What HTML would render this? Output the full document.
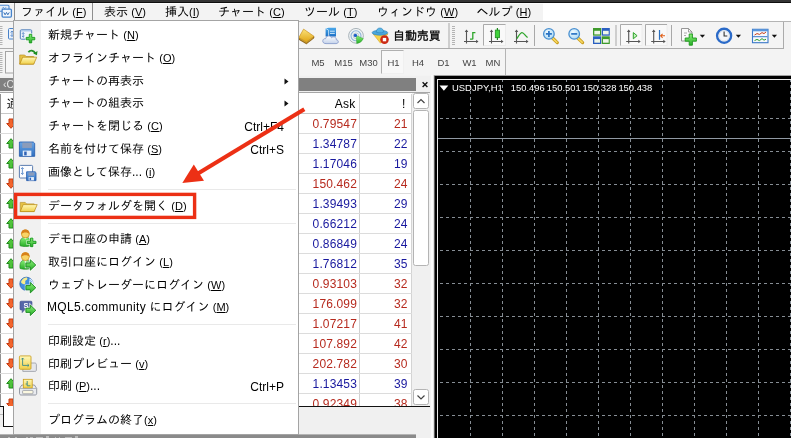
<!DOCTYPE html>
<html lang="ja"><head><meta charset="utf-8"><title>MetaTrader 4</title>
<style>
*{box-sizing:border-box;margin:0;padding:0}
html,body{width:791px;height:438px;overflow:hidden;background:#f2f2f2}
body{position:relative;font-family:"Liberation Sans", "IPAGothic", "Noto Sans CJK JP", sans-serif;font-size:12px;color:#000;-webkit-font-smoothing:antialiased}
.abs{position:absolute}
.t{position:absolute;white-space:nowrap;line-height:1}
u{text-decoration:underline;text-underline-offset:1px}
.k{font-size:11px}
.t,.mi,.sc,.cell,.tf{will-change:opacity}
.mi{position:absolute;left:48px;white-space:nowrap;font-size:12px;line-height:14px;height:14px}
.sc{position:absolute;right:8px;white-space:nowrap;font-size:12px;line-height:14px;height:14px}
.sep{position:absolute;left:34px;right:2px;height:1px;background:#e9e9e9}
.cell{position:absolute;white-space:nowrap;font-size:12px;line-height:14px;height:14px;text-align:right;letter-spacing:.15px}
.tf{position:absolute;top:57px;font-size:9.5px;line-height:12px;color:#444;white-space:nowrap;transform:translateX(-50%)}
</style></head><body>

<div class="abs" style="left:0;top:0;width:791px;height:3px;background:#0e0e0e"></div>
<div class="abs" style="left:0;top:0;width:791px;height:2px;background:#343434"></div>
<div class="abs" style="left:0;top:3px;width:543px;height:19px;background:#f3f3f3;border-top:1px solid #fbfbfb"></div>
<div class="abs" style="left:543px;top:3px;width:248px;height:19px;background:#fff"></div>
<svg class="abs" style="left:0;top:3px" width="14" height="17" viewBox="0 3 14 17"><rect x="-2" y="5.300" width="11" height="6" rx="1" fill="#e4eefa" stroke="#4f8ad2" stroke-width="1.100"/><path d="M2 8.800l1.300-1.600 1.400 1.600 1.300-1.600" fill="none" stroke="#4f8ad2" stroke-width=".8"/><rect x="2.100" y="9.100" width="9.300" height="8" rx="1" fill="#f2f7fd" stroke="#4583cc" stroke-width="1.300"/><path d="M3.800 12.400l1.300 2.400 1.400-2.400 1.300 2.400 1.500-2.400" fill="none" stroke="#3a73b8" stroke-width="1"/></svg>
<div class="abs" style="left:14px;top:3px;width:79px;height:18px;background:#f5f5f5;border:1px solid #8e8e8e;border-top:none;border-bottom:none"></div>
<div class="t" style="left:21px;top:5px;font-size:12px;line-height:14px">ファイル <span class="k">(<u>F</u>)</span></div>
<div class="t" style="left:104px;top:5px;font-size:12px;line-height:14px">表示 <span class="k">(<u>V</u>)</span></div>
<div class="t" style="left:165px;top:5px;font-size:12px;line-height:14px">挿入<span class="k">(<u>I</u>)</span></div>
<div class="t" style="left:218px;top:5px;font-size:12px;line-height:14px">チャート <span class="k">(<u>C</u>)</span></div>
<div class="t" style="left:304px;top:5px;font-size:12px;line-height:14px">ツール <span class="k">(<u>T</u>)</span></div>
<div class="t" style="left:377px;top:5px;font-size:12px;line-height:14px">ウィンドウ <span class="k">(<u>W</u>)</span></div>
<div class="t" style="left:476.5px;top:5px;font-size:12px;line-height:14px">ヘルプ <span class="k">(<u>H</u>)</span></div>
<div class="abs" style="left:0;top:21px;width:791px;height:1px;background:#b4b4b4"></div>
<div class="abs" style="left:0;top:22px;width:784px;height:27px;background:#f4f4f4;border-right:1px solid #ababab;border-bottom:1px solid #ababab"></div>
<div class="abs" style="left:784px;top:22px;width:7px;height:27px;background:#f3f3f3"></div>
<div class="abs" style="left:0;top:49px;width:791px;height:27px;background:#f3f3f3"></div>
<div class="abs" style="left:0;top:49px;width:506px;height:26px;background:#f4f4f4;border-right:1px solid #b4b4b4"></div>
<div class="abs" style="left:381px;top:50px;width:23px;height:24px;background:#f8f8f8;border:1px solid #f0f0f0;border-left-color:#b0b0b0;border-top-color:#b0b0b0"></div>
<div class="tf" style="left:318px">M5</div>
<div class="tf" style="left:343.5px">M15</div>
<div class="tf" style="left:368.5px">M30</div>
<div class="tf" style="left:393.5px">H1</div>
<div class="tf" style="left:418px">H4</div>
<div class="tf" style="left:443.5px">D1</div>
<div class="tf" style="left:469.5px">W1</div>
<div class="tf" style="left:493px">MN</div>
<div class="t" style="left:393px;top:29px;font-size:12px;line-height:14px;-webkit-text-stroke:.32px #000;letter-spacing:-.1px">自動売買</div>
<svg class="abs" style="left:0;top:0" width="791" height="438" viewBox="0 0 791 438"><defs><linearGradient id="gy" x1="0" y1="0" x2="0" y2="1"><stop offset="0" stop-color="#fbe27a"/><stop offset="1" stop-color="#e0a514"/></linearGradient><linearGradient id="gb" x1="0" y1="0" x2="0" y2="1"><stop offset="0" stop-color="#4aa8ea"/><stop offset="1" stop-color="#1d6fc4"/></linearGradient><linearGradient id="gg" x1="0" y1="0" x2="0" y2="1"><stop offset="0" stop-color="#8af078"/><stop offset="1" stop-color="#27ae27"/></linearGradient><linearGradient id="gc" x1="0" y1="0" x2="0" y2="1"><stop offset="0" stop-color="#ffffff"/><stop offset="1" stop-color="#c4d2ea"/></linearGradient><radialGradient id="gl" cx=".4" cy=".35" r=".7"><stop offset="0" stop-color="#f2fbff"/><stop offset="1" stop-color="#a9d8f4"/></radialGradient><linearGradient id="gf" x1="0" y1="0" x2="0" y2="1"><stop offset="0" stop-color="#fff8b8"/><stop offset="1" stop-color="#f0d04a"/></linearGradient><linearGradient id="gfl" x1="0" y1="0" x2="0" y2="1"><stop offset="0" stop-color="#6aa6e6"/><stop offset="1" stop-color="#2f6fc0"/></linearGradient></defs><rect x="0" y="26" width="2.500" height="1" fill="#b4b4b4"/><rect x="0" y="28" width="2.500" height="1" fill="#b4b4b4"/><rect x="0" y="30" width="2.500" height="1" fill="#b4b4b4"/><rect x="0" y="32" width="2.500" height="1" fill="#b4b4b4"/><rect x="0" y="34" width="2.500" height="1" fill="#b4b4b4"/><rect x="0" y="36" width="2.500" height="1" fill="#b4b4b4"/><rect x="0" y="38" width="2.500" height="1" fill="#b4b4b4"/><rect x="0" y="40" width="2.500" height="1" fill="#b4b4b4"/><rect x="0" y="42" width="2.500" height="1" fill="#b4b4b4"/><rect x="0" y="44" width="2.500" height="1" fill="#b4b4b4"/><rect x="0" y="52" width="2.500" height="1" fill="#b4b4b4"/><rect x="0" y="54" width="2.500" height="1" fill="#b4b4b4"/><rect x="0" y="56" width="2.500" height="1" fill="#b4b4b4"/><rect x="0" y="58" width="2.500" height="1" fill="#b4b4b4"/><rect x="0" y="60" width="2.500" height="1" fill="#b4b4b4"/><rect x="0" y="62" width="2.500" height="1" fill="#b4b4b4"/><rect x="0" y="64" width="2.500" height="1" fill="#b4b4b4"/><rect x="0" y="66" width="2.500" height="1" fill="#b4b4b4"/><rect x="0" y="68" width="2.500" height="1" fill="#b4b4b4"/><rect x="0" y="70" width="2.500" height="1" fill="#b4b4b4"/><rect x="0" y="72" width="2.500" height="1" fill="#b4b4b4"/><rect x="8.5" y="28.5" width="10" height="10.5" rx="1" fill="#e9f1fb" stroke="#4a82c8"/><path d="M12 31v5.5M10.6 32.4L12 31l1.4 1.4M10.6 35.1L12 36.5l1.4-1.4" stroke="#4a82c8" stroke-width=".8" fill="none"/><rect x="5.500" y="51.500" width="12" height="21.500" fill="#f7f7f7" stroke="#a4a4a4"/><path d="M298.8 37.600L306.400 42 314 36.300V38L306.400 43.900 298.800 39.400Z" fill="#9a6a10" stroke="#7a4e0a" stroke-width=".5"/><path d="M303.600 29.100L314 36.300 306.400 42 298.800 37.600Z" fill="url(#gy)" stroke="#c48a14" stroke-width=".6"/><path d="M299.600 38.700L306.400 42.700 313.400 37.400" fill="none" stroke="#f0cc50" stroke-width=".5"/><path d="M325.6 28.4l3-.6h7.4v8.8h-10.4z" fill="url(#gb)"/><path d="M326 28.6l2.6 1.6v6.4" stroke="#d6ecfb" stroke-width=".8" fill="none"/><path d="M330 31.2h4.8M330 33.4h4.8" stroke="#cfe8fa" stroke-width="1"/><path d="M326 43.6c-2.600 0-3.400-1.600-3.200-2.900.200-1.500 1.600-2.300 2.800-2 .300-2 2.300-3.200 4.100-2.600 1 .300 1.600 1 1.900 1.700.800-1 2.500-1.200 3.500-.500 1 .600 1.300 1.600 1.200 2.500 1.300.100 2 1 2 1.900 0 1-.800 1.900-2.200 1.900z" fill="url(#gc)" stroke="#7d93c6" stroke-width=".8"/><circle cx="356" cy="35.8" r="7.4" fill="#eef2f4" stroke="#aab4ba" stroke-width="1"/><circle cx="356" cy="35.8" r="5" fill="none" stroke="#8fb5d8" stroke-width="1.1"/><circle cx="356" cy="35.8" r="2.8" fill="none" stroke="#b8c6cf" stroke-width=".9"/><path d="M356.200 35.400L356.700 43.600A8 8 0 0 0 363.300 38.600Z" fill="url(#gg)" stroke="#2a9a2a" stroke-width=".4"/><circle cx="355.4" cy="35.4" r="1.7" fill="#1f5fc8"/><path d="M373 33.800L380.500 43.200 388 33.800Z" fill="#f6d24a" stroke="#d9a520" stroke-width=".6"/><ellipse cx="379.900" cy="32.700" rx="7.800" ry="2.500" fill="#4aa6dc" stroke="#2a7fb8" stroke-width=".6"/><path d="M376.300 32.200c0-2.600 1.400-4.200 3.600-4.200s3.600 1.600 3.600 4.200c-2 .800-5.200.800-7.200 0z" fill="#5ab4e4" stroke="#2a7fb8" stroke-width=".6"/><circle cx="384.500" cy="39.600" r="4.300" fill="#cc2a14"/><rect x="382.800" y="37.900" width="3.400" height="3.400" fill="#fff"/><rect x="448.500" y="23" width="1" height="25" fill="#a8a8a8"/><rect x="452" y="26" width="3" height="1" fill="#b4b4b4"/><rect x="452" y="28" width="3" height="1" fill="#b4b4b4"/><rect x="452" y="30" width="3" height="1" fill="#b4b4b4"/><rect x="452" y="32" width="3" height="1" fill="#b4b4b4"/><rect x="452" y="34" width="3" height="1" fill="#b4b4b4"/><rect x="452" y="36" width="3" height="1" fill="#b4b4b4"/><rect x="452" y="38" width="3" height="1" fill="#b4b4b4"/><rect x="452" y="40" width="3" height="1" fill="#b4b4b4"/><rect x="452" y="42" width="3" height="1" fill="#b4b4b4"/><rect x="452" y="44" width="3" height="1" fill="#b4b4b4"/><path d="M466.5 30.5V43.5 M464 41.5H477.5" stroke="#555" stroke-width="1.1" fill="none"/><path d="M466.5 29.5l-1.8 2.4h3.6z M478.5 41.5l-2.4 -1.800v3.600z" fill="#555"/><path d="M472.800 32v7.200M472.800 39.200h-2.800M472.800 32.600h2.600" stroke="#2da52a" stroke-width="1.300" fill="none"/><rect x="483.500" y="24.500" width="22" height="21" fill="#f9f9f9" stroke="#ececec"/><path d="M483.500 45.500V24.500H505.500" fill="none" stroke="#aaa"/><path d="M491.5 30.5V43.5 M489 41.5H502.5" stroke="#555" stroke-width="1.1" fill="none"/><path d="M491.5 29.5l-1.8 2.4h3.6z M503.5 41.5l-2.4 -1.800v3.600z" fill="#555"/><path d="M497.400 28v12" stroke="#1f8a1f" stroke-width="1.200"/><rect x="495.300" y="30.100" width="4.300" height="7.600" fill="#3fd23a" stroke="#1f8a1f" stroke-width=".8"/><path d="M516.5 30.5V43.5 M514 41.5H527.5" stroke="#555" stroke-width="1.1" fill="none"/><path d="M516.5 29.5l-1.8 2.4h3.6z M528.5 41.5l-2.4 -1.800v3.600z" fill="#555"/><path d="M516.800 38.600c2-3 3.600-6 5.200-6 1.800 0 3.200 3 5.600 5" stroke="#2da52a" stroke-width="1.300" fill="none"/><rect x="534" y="25" width="1" height="21" fill="#a8a8a8"/><path d="M552.5 38l4.800 4.600" stroke="#c79a1a" stroke-width="3.200" stroke-linecap="round"/><path d="M552.8 38.300l4.200 4" stroke="#f7d860" stroke-width="1.600" stroke-linecap="round"/><circle cx="548.9" cy="33.900" r="5.300" fill="url(#gl)" stroke="#4a90d0" stroke-width="1.300"/><path d="M545.9 33.900h6M548.9 30.900v6" stroke="#2a74c4" stroke-width="1.700"/><path d="M577.8 38l4.800 4.600" stroke="#c79a1a" stroke-width="3.200" stroke-linecap="round"/><path d="M578.1 38.300l4.200 4" stroke="#f7d860" stroke-width="1.600" stroke-linecap="round"/><circle cx="574.2" cy="33.900" r="5.300" fill="url(#gl)" stroke="#4a90d0" stroke-width="1.300"/><path d="M571.2 33.900h6" stroke="#2a74c4" stroke-width="1.700"/><rect x="593" y="28" width="8.100" height="7.700" fill="#3f9a2c"/><rect x="594.3" y="30.8" width="5.700" height="3.600" fill="#eef6e8"/><rect x="601.7" y="28" width="8.100" height="7.700" fill="#2a5fc0"/><rect x="603" y="30.8" width="5.700" height="3.600" fill="#eef6e8"/><rect x="593" y="36.3" width="8.100" height="7.700" fill="#2a5fc0"/><rect x="594.3" y="39.1" width="5.700" height="3.600" fill="#eef6e8"/><rect x="601.7" y="36.3" width="8.100" height="7.700" fill="#3f9a2c"/><rect x="603" y="39.1" width="5.700" height="3.600" fill="#eef6e8"/><rect x="615.500" y="25" width="1" height="21" fill="#a8a8a8"/><rect x="620.5" y="24.500" width="21.500" height="21" fill="#f9f9f9" stroke="#ececec"/><path d="M620.5 45.500V24.500H642" fill="none" stroke="#aaa"/><rect x="645.5" y="24.500" width="21.500" height="21" fill="#f9f9f9" stroke="#ececec"/><path d="M645.5 45.500V24.500H667" fill="none" stroke="#aaa"/><path d="M628.7 30.5V43.5 M626.2 41.5H639.7" stroke="#555" stroke-width="1.1" fill="none"/><path d="M628.7 29.5l-1.8 2.4h3.6z M640.7 41.5l-2.4 -1.800v3.600z" fill="#555"/><path d="M633.300 32.600l3.800 3.100-3.800 3.100z" fill="#c8f0c0" stroke="#2da52a" stroke-width="1"/><path d="M653.7 30.5V43.5 M651.2 41.5H664.7" stroke="#555" stroke-width="1.1" fill="none"/><path d="M653.7 29.5l-1.8 2.4h3.6z M665.7 41.5l-2.4 -1.800v3.600z" fill="#555"/><path d="M659.500 30v9.800" stroke="#2a6fc0" stroke-width="1.200"/><path d="M665 35.800h-4M662.600 33.800l-2 2 2 2" stroke="#e0601a" stroke-width="1.100" fill="none"/><rect x="671" y="25" width="1" height="21" fill="#a8a8a8"/><path d="M681.500 28.500h7l3.500 3.500v9h-10.500z" fill="#fafafa" stroke="#8a8a8a" stroke-width=".9"/><path d="M688.500 28.500v3.500h3.500" fill="none" stroke="#8a8a8a" stroke-width=".8"/><path d="M684 33h3M684 35.500h2" stroke="#999" stroke-width=".8"/><path d="M689.200 34h3.200v4h4v3.200h-4v4h-3.200v-4h-4v-3.200h4z" fill="url(#gg)" stroke="#1c961c" stroke-width=".9"/><path d="M699.8 34.7h5.2l-2.6 3z" fill="#111"/><circle cx="724.100" cy="35.800" r="7" fill="#fff" stroke="#2a6ac8" stroke-width="2.400"/><circle cx="724.100" cy="35.800" r="5.200" fill="#f4f6fa" stroke="#c8d0dc" stroke-width=".6"/><path d="M724.100 31.600v4.400h3.200" stroke="#333" stroke-width="1.100" fill="none"/><path d="M735.8 34.7h5.2l-2.6 3z" fill="#111"/><rect x="752.500" y="29.300" width="15.500" height="13.400" fill="#f6f9fd" stroke="#3a78c8" stroke-width="1.100"/><rect x="752.500" y="29.300" width="15.500" height="2" fill="#5a96dc"/><path d="M753 36.700h14.500" stroke="#3a78c8" stroke-width="1"/><path d="M754.500 35l2.500-1.400 2.500.8 2.500-1.800 2 1 2-1.600" stroke="#c8401a" stroke-width="1" fill="none"/><path d="M754.500 40.600l2.500-1.200 2.500 1.200 2.500-2 2 1.600 2-1" stroke="#2a9a2a" stroke-width="1" fill="none"/><path d="M771.8 34.7h5.2l-2.6 3z" fill="#111"/></svg>
<div class="abs" style="left:0;top:76px;width:432px;height:362px;background:#f0f0f0"></div>
<div class="abs" style="left:0;top:78px;width:416px;height:13px;background:#808080"></div>
<div class="t" style="left:3px;top:79px;font-size:10.5px;line-height:11px;color:#e4e4e4">‹C</div>
<svg class="abs" style="left:420px;top:80px" width="10" height="10"><path d="M2.600 2.300l4.800 4.800M7.400 2.300l-4.800 4.800" stroke="#111" stroke-width="1.350"/></svg>
<div class="abs" style="left:0;top:93px;width:412px;height:314px;background:#fff"></div>
<div class="abs" style="left:0;top:92.300px;width:430px;height:1px;background:#a6a6a6"></div>
<div class="abs" style="left:0;top:113px;width:412px;height:1px;background:#c8c8c8"></div>
<div class="cell" style="left:300px;width:55.5px;top:97px;color:#000;letter-spacing:.25px">Ask</div>
<div class="cell" style="left:362px;width:43.5px;top:97px;color:#000">!</div>
<div class="t" style="left:6.5px;top:97px;font-size:12px;line-height:14px">通貨</div>
<div class="abs" style="left:359px;top:94px;width:1px;height:312px;background:#d0d0d0"></div>
<div class="abs" style="left:411px;top:94px;width:1px;height:312px;background:#d4d4d4"></div>
<div class="abs" style="left:.4px;top:94px;width:1px;height:312px;background:#909090"></div>
<div class="abs" style="left:0;top:133px;width:412px;height:1px;background:#dcdcdc"></div>
<div class="cell" style="left:300px;width:57px;top:117px;color:#b62a1e">0.79547</div>
<div class="cell" style="left:362px;width:45.6px;top:117px;color:#b62a1e">21</div>
<svg class="abs" style="left:5.6px;top:118px" width="10" height="11" viewBox="0 0 10 11"><path d="M5 10.3L9.3 5.5H7V1H3V5.5H.7Z" fill="#f2642c" stroke="#c43a10" stroke-width="1"/></svg>
<div class="abs" style="left:0;top:153px;width:412px;height:1px;background:#dcdcdc"></div>
<div class="cell" style="left:300px;width:57px;top:137px;color:#18189e">1.34787</div>
<div class="cell" style="left:362px;width:45.6px;top:137px;color:#18189e">22</div>
<svg class="abs" style="left:5.6px;top:138px" width="10" height="11" viewBox="0 0 10 11"><path d="M5 .7L9.3 5.5H7V10H3V5.5H.7Z" fill="#4fc23a" stroke="#1f8a1a" stroke-width="1"/></svg>
<div class="abs" style="left:0;top:173px;width:412px;height:1px;background:#dcdcdc"></div>
<div class="cell" style="left:300px;width:57px;top:157px;color:#18189e">1.17046</div>
<div class="cell" style="left:362px;width:45.6px;top:157px;color:#18189e">19</div>
<svg class="abs" style="left:5.6px;top:158px" width="10" height="11" viewBox="0 0 10 11"><path d="M5 .7L9.3 5.5H7V10H3V5.5H.7Z" fill="#4fc23a" stroke="#1f8a1a" stroke-width="1"/></svg>
<div class="abs" style="left:0;top:193px;width:412px;height:1px;background:#dcdcdc"></div>
<div class="cell" style="left:300px;width:57px;top:177px;color:#b62a1e">150.462</div>
<div class="cell" style="left:362px;width:45.6px;top:177px;color:#b62a1e">24</div>
<svg class="abs" style="left:5.6px;top:178px" width="10" height="11" viewBox="0 0 10 11"><path d="M5 10.3L9.3 5.5H7V1H3V5.5H.7Z" fill="#f2642c" stroke="#c43a10" stroke-width="1"/></svg>
<div class="abs" style="left:0;top:213px;width:412px;height:1px;background:#dcdcdc"></div>
<div class="cell" style="left:300px;width:57px;top:197px;color:#18189e">1.39493</div>
<div class="cell" style="left:362px;width:45.6px;top:197px;color:#18189e">29</div>
<svg class="abs" style="left:5.6px;top:198px" width="10" height="11" viewBox="0 0 10 11"><path d="M5 .7L9.3 5.5H7V10H3V5.5H.7Z" fill="#4fc23a" stroke="#1f8a1a" stroke-width="1"/></svg>
<div class="abs" style="left:0;top:233px;width:412px;height:1px;background:#dcdcdc"></div>
<div class="cell" style="left:300px;width:57px;top:217px;color:#18189e">0.66212</div>
<div class="cell" style="left:362px;width:45.6px;top:217px;color:#18189e">24</div>
<svg class="abs" style="left:5.6px;top:218px" width="10" height="11" viewBox="0 0 10 11"><path d="M5 .7L9.3 5.5H7V10H3V5.5H.7Z" fill="#4fc23a" stroke="#1f8a1a" stroke-width="1"/></svg>
<div class="abs" style="left:0;top:253px;width:412px;height:1px;background:#dcdcdc"></div>
<div class="cell" style="left:300px;width:57px;top:237px;color:#18189e">0.86849</div>
<div class="cell" style="left:362px;width:45.6px;top:237px;color:#18189e">24</div>
<svg class="abs" style="left:5.6px;top:238px" width="10" height="11" viewBox="0 0 10 11"><path d="M5 .7L9.3 5.5H7V10H3V5.5H.7Z" fill="#4fc23a" stroke="#1f8a1a" stroke-width="1"/></svg>
<div class="abs" style="left:0;top:273px;width:412px;height:1px;background:#dcdcdc"></div>
<div class="cell" style="left:300px;width:57px;top:257px;color:#18189e">1.76812</div>
<div class="cell" style="left:362px;width:45.6px;top:257px;color:#18189e">35</div>
<svg class="abs" style="left:5.6px;top:258px" width="10" height="11" viewBox="0 0 10 11"><path d="M5 .7L9.3 5.5H7V10H3V5.5H.7Z" fill="#4fc23a" stroke="#1f8a1a" stroke-width="1"/></svg>
<div class="abs" style="left:0;top:293px;width:412px;height:1px;background:#dcdcdc"></div>
<div class="cell" style="left:300px;width:57px;top:277px;color:#b62a1e">0.93103</div>
<div class="cell" style="left:362px;width:45.6px;top:277px;color:#b62a1e">32</div>
<svg class="abs" style="left:5.6px;top:278px" width="10" height="11" viewBox="0 0 10 11"><path d="M5 10.3L9.3 5.5H7V1H3V5.5H.7Z" fill="#f2642c" stroke="#c43a10" stroke-width="1"/></svg>
<div class="abs" style="left:0;top:313px;width:412px;height:1px;background:#dcdcdc"></div>
<div class="cell" style="left:300px;width:57px;top:297px;color:#b62a1e">176.099</div>
<div class="cell" style="left:362px;width:45.6px;top:297px;color:#b62a1e">32</div>
<svg class="abs" style="left:5.6px;top:298px" width="10" height="11" viewBox="0 0 10 11"><path d="M5 10.3L9.3 5.5H7V1H3V5.5H.7Z" fill="#f2642c" stroke="#c43a10" stroke-width="1"/></svg>
<div class="abs" style="left:0;top:333px;width:412px;height:1px;background:#dcdcdc"></div>
<div class="cell" style="left:300px;width:57px;top:317px;color:#b62a1e">1.07217</div>
<div class="cell" style="left:362px;width:45.6px;top:317px;color:#b62a1e">41</div>
<svg class="abs" style="left:5.6px;top:318px" width="10" height="11" viewBox="0 0 10 11"><path d="M5 10.3L9.3 5.5H7V1H3V5.5H.7Z" fill="#f2642c" stroke="#c43a10" stroke-width="1"/></svg>
<div class="abs" style="left:0;top:353px;width:412px;height:1px;background:#dcdcdc"></div>
<div class="cell" style="left:300px;width:57px;top:337px;color:#b62a1e">107.892</div>
<div class="cell" style="left:362px;width:45.6px;top:337px;color:#b62a1e">42</div>
<svg class="abs" style="left:5.6px;top:338px" width="10" height="11" viewBox="0 0 10 11"><path d="M5 10.3L9.3 5.5H7V1H3V5.5H.7Z" fill="#f2642c" stroke="#c43a10" stroke-width="1"/></svg>
<div class="abs" style="left:0;top:373px;width:412px;height:1px;background:#dcdcdc"></div>
<div class="cell" style="left:300px;width:57px;top:357px;color:#b62a1e">202.782</div>
<div class="cell" style="left:362px;width:45.6px;top:357px;color:#b62a1e">30</div>
<svg class="abs" style="left:5.6px;top:358px" width="10" height="11" viewBox="0 0 10 11"><path d="M5 10.3L9.3 5.5H7V1H3V5.5H.7Z" fill="#f2642c" stroke="#c43a10" stroke-width="1"/></svg>
<div class="abs" style="left:0;top:393px;width:412px;height:1px;background:#dcdcdc"></div>
<div class="cell" style="left:300px;width:57px;top:377px;color:#18189e">1.13453</div>
<div class="cell" style="left:362px;width:45.6px;top:377px;color:#18189e">39</div>
<svg class="abs" style="left:5.6px;top:378px" width="10" height="11" viewBox="0 0 10 11"><path d="M5 .7L9.3 5.5H7V10H3V5.5H.7Z" fill="#4fc23a" stroke="#1f8a1a" stroke-width="1"/></svg>
<div class="abs" style="left:0;top:393px;width:411px;height:13px;overflow:hidden"><div class="cell" style="left:300px;width:57px;top:4px;color:#b62a1e">0.92349</div><div class="cell" style="left:362px;width:45.6px;top:4px;color:#b62a1e">38</div></div>
<svg class="abs" style="left:5.6px;top:398px" width="10" height="11" viewBox="0 0 10 11"><path d="M5 10.3L9.3 5.5H7V1H3V5.5H.7Z" fill="#f2642c" stroke="#c43a10" stroke-width="1"/></svg>
<div class="abs" style="left:412px;top:93px;width:18px;height:313px;background:#f0f0f0"></div>
<div class="abs" style="left:412.5px;top:93.2px;width:16px;height:16px;background:#fff;border:1px solid #b4b4b4;border-radius:2.5px"></div>
<svg class="abs" style="left:412.700px;top:93.200px" width="16" height="16"><path d="M4.500 10L8 6.500 11.500 10" fill="none" stroke="#444" stroke-width="1.2"/></svg>
<div class="abs" style="left:412.5px;top:110px;width:16px;height:155.5px;background:#fff;border:1px solid #b4b4b4;border-radius:2.5px"></div>
<div class="abs" style="left:412.5px;top:389px;width:16px;height:16px;background:#fff;border:1px solid #b4b4b4;border-radius:2.5px"></div>
<svg class="abs" style="left:413px;top:389px" width="16" height="16"><path d="M4.5 6.5L8 10 11.5 6.5" fill="none" stroke="#444" stroke-width="1.2"/></svg>
<div class="abs" style="left:0;top:407px;width:431px;height:27px;background:#f0f0f0"></div>
<div class="abs" style="left:0;top:406px;width:430px;height:1px;background:#111"></div>
<div class="abs" style="left:3px;top:406px;width:17px;height:21px;background:#fff;border-left:1px solid #111;border-bottom:1px solid #111"></div>
<div class="abs" style="left:0;top:427px;width:20px;height:7px;background:#fafafa"></div>
<div class="abs" style="left:0;top:414px;width:3px;height:1px;background:#bbb"></div>
<div class="abs" style="left:0;top:434px;width:416px;height:4px;background:#8a8a8a;border-top:1px solid #b4b4b4"></div>
<div class="abs" style="left:7.6px;top:437px;width:2.1px;height:1px;background:#bcbcbc"></div><div class="abs" style="left:14.6px;top:437px;width:2.1px;height:1px;background:#bcbcbc"></div><div class="abs" style="left:25.7px;top:437px;width:2.1px;height:1px;background:#bcbcbc"></div><div class="abs" style="left:29.9px;top:437px;width:2.8px;height:1px;background:#bcbcbc"></div><div class="abs" style="left:36.2px;top:437px;width:6.9px;height:1px;background:#bcbcbc"></div><div class="abs" style="left:45.9px;top:436px;width:2.8px;height:2px;background:#bcbcbc"></div><div class="abs" style="left:54.9px;top:437px;width:1.4px;height:1px;background:#bcbcbc"></div><div class="abs" style="left:59.1px;top:437px;width:1.4px;height:1px;background:#bcbcbc"></div><div class="abs" style="left:65.4px;top:437px;width:6.9px;height:1px;background:#bcbcbc"></div><div class="abs" style="left:75.1px;top:436px;width:2.8px;height:2px;background:#bcbcbc"></div>
<div class="abs" style="left:431px;top:75px;width:360px;height:363px;background:#fafafa"></div>
<div class="abs" style="left:433px;top:75px;width:358px;height:363px;background:#e0e0e0"></div>
<div class="abs" style="left:434px;top:75px;width:357px;height:363px;background:#a0a0a0"></div>
<div class="abs" style="left:434px;top:76px;width:357px;height:362px;background:#000;border-left:1px solid #5c5c5c"></div>
<div class="abs" style="left:437px;top:79px;width:354px;height:359px;background:#000;border-left:1px solid #e6e6e6;border-top:1px solid #e6e6e6"></div>
<svg class="abs" style="left:438px;top:80px" width="353" height="358" viewBox="438 80 353 358" shape-rendering="crispEdges"><line x1="470.5" y1="79" x2="470.5" y2="438" stroke="#868d94" stroke-width="1" stroke-dasharray="3 3"/><line x1="502.5" y1="79" x2="502.5" y2="438" stroke="#868d94" stroke-width="1" stroke-dasharray="3 3"/><line x1="534.5" y1="79" x2="534.5" y2="438" stroke="#868d94" stroke-width="1" stroke-dasharray="3 3"/><line x1="566.5" y1="79" x2="566.5" y2="438" stroke="#868d94" stroke-width="1" stroke-dasharray="3 3"/><line x1="598.5" y1="79" x2="598.5" y2="438" stroke="#868d94" stroke-width="1" stroke-dasharray="3 3"/><line x1="630.5" y1="79" x2="630.5" y2="438" stroke="#868d94" stroke-width="1" stroke-dasharray="3 3"/><line x1="662.5" y1="79" x2="662.5" y2="438" stroke="#868d94" stroke-width="1" stroke-dasharray="3 3"/><line x1="694.5" y1="79" x2="694.5" y2="438" stroke="#868d94" stroke-width="1" stroke-dasharray="3 3"/><line x1="726.5" y1="79" x2="726.5" y2="438" stroke="#868d94" stroke-width="1" stroke-dasharray="3 3"/><line x1="758.5" y1="79" x2="758.5" y2="438" stroke="#868d94" stroke-width="1" stroke-dasharray="3 3"/><line x1="790.5" y1="79" x2="790.5" y2="438" stroke="#868d94" stroke-width="1" stroke-dasharray="3 3"/><line x1="434" y1="118.5" x2="791" y2="118.5" stroke="#868d94" stroke-width="1" stroke-dasharray="3 3"/><line x1="434" y1="151.5" x2="791" y2="151.5" stroke="#868d94" stroke-width="1" stroke-dasharray="3 3"/><line x1="434" y1="184.5" x2="791" y2="184.5" stroke="#868d94" stroke-width="1" stroke-dasharray="3 3"/><line x1="434" y1="217.5" x2="791" y2="217.5" stroke="#868d94" stroke-width="1" stroke-dasharray="3 3"/><line x1="434" y1="250.5" x2="791" y2="250.5" stroke="#868d94" stroke-width="1" stroke-dasharray="3 3"/><line x1="434" y1="283.5" x2="791" y2="283.5" stroke="#868d94" stroke-width="1" stroke-dasharray="3 3"/><line x1="434" y1="316.5" x2="791" y2="316.5" stroke="#868d94" stroke-width="1" stroke-dasharray="3 3"/><line x1="434" y1="349.5" x2="791" y2="349.5" stroke="#868d94" stroke-width="1" stroke-dasharray="3 3"/><line x1="434" y1="382.5" x2="791" y2="382.5" stroke="#868d94" stroke-width="1" stroke-dasharray="3 3"/><line x1="434" y1="415.5" x2="791" y2="415.5" stroke="#868d94" stroke-width="1" stroke-dasharray="3 3"/><line x1="438" y1="138.5" x2="791" y2="138.5" stroke="#9099a3" stroke-width="1"/></svg>
<svg class="abs" style="left:439.400px;top:85.100px" width="10" height="7"><path d="M.5 .5H9.300L4.900 5.800Z" fill="#fff"/></svg>
<div class="t" style="left:452px;top:82px;font-size:9.45px;line-height:11px;color:#fff">USDJPY,H1</div>
<div class="t" style="left:510.8px;top:82px;font-size:9.4px;line-height:11px;color:#fff">150.496</div>
<div class="t" style="left:546.8px;top:82px;font-size:9.4px;line-height:11px;color:#fff">150.501</div>
<div class="t" style="left:582.6px;top:82px;font-size:9.4px;line-height:11px;color:#fff">150.328</div>
<div class="t" style="left:618.4px;top:82px;font-size:9.4px;line-height:11px;color:#fff">150.438</div>
<div class="abs" style="left:13px;top:20px;width:286px;height:415px;background:#fff;border:1px solid #a4a4a4">
<div class="abs" style="left:0;top:0;width:27px;height:413px;background:#f1f1f1"></div>
<div class="mi" style="left:34px;top:6.8px">新規チャート <span class="k">(<u>N</u>)</span></div>
<div class="mi" style="left:34px;top:29.8px">オフラインチャート <span class="k">(<u>O</u>)</span></div>
<div class="mi" style="left:34px;top:52.6px">チャートの再表示</div>
<svg class="abs" style="left:270px;top:56.6px" width="5" height="7"><path d="M.5 .5L4.5 3.5 .5 6.5Z" fill="#111"/></svg>
<div class="mi" style="left:34px;top:75.4px">チャートの組表示</div>
<svg class="abs" style="left:270px;top:79.4px" width="5" height="7"><path d="M.5 .5L4.5 3.5 .5 6.5Z" fill="#111"/></svg>
<div class="mi" style="left:34px;top:98.2px">チャートを閉じる <span class="k">(<u>C</u>)</span></div>
<div class="sc" style="right:14px;top:98.9px">Ctrl+F4</div>
<div class="mi" style="left:34px;top:121.1px">名前を付けて保存 <span class="k">(<u>S</u>)</span></div>
<div class="sc" style="right:14px;top:121.8px">Ctrl+S</div>
<div class="mi" style="left:34px;top:144px">画像として保存... <span class="k">(<u>i</u>)</span></div>
<div class="sep" style="top:168px"></div>
<div class="mi" style="left:34px;top:177.8px">データフォルダを開く <span class="k">(<u>D</u>)</span></div>
<div class="sep" style="top:202px"></div>
<div class="mi" style="left:34px;top:211.2px">デモ口座の申請 <span class="k">(<u>A</u>)</span></div>
<div class="mi" style="left:34px;top:234px">取引口座にログイン <span class="k">(<u>L</u>)</span></div>
<div class="mi" style="left:34px;top:256.8px">ウェブトレーダーにログイン <span class="k">(<u>W</u>)</span></div>
<div class="mi" style="left:34px;top:279.4px"><span style="letter-spacing:.36px;margin-left:-1px">MQL5.community</span> にログイン <span class="k">(<u>M</u>)</span></div>
<div class="sep" style="top:303px"></div>
<div class="mi" style="left:34px;top:313px">印刷設定 <span class="k">(<u>r</u>)</span>...</div>
<div class="mi" style="left:34px;top:336px">印刷プレビュー <span class="k">(<u>v</u>)</span></div>
<div class="mi" style="left:34px;top:358.3px">印刷 <span class="k">(<u>P</u>)</span>...</div>
<div class="sc" style="right:14px;top:359px">Ctrl+P</div>
<div class="sep" style="top:382px"></div>
<div class="mi" style="left:34px;top:392.4px">プログラムの終了<span class="k">(<u>x</u>)</span></div>
</div>
<svg class="abs" style="left:0;top:0" width="791" height="438" viewBox="0 0 791 438"><rect x="20.300" y="29.800" width="11.400" height="9.400" rx="1" fill="#eff4fb" stroke="#4174b4" stroke-width=".9"/><rect x="20.800" y="30.300" width="10.400" height="1.200" fill="#a9c6ea"/><path d="M23.200 32.600v4.600M22 33.800l1.200-1.200 1.200 1.200M22 36l1.200 1.200 1.200-1.200" stroke="#4a7fc4" stroke-width=".8" fill="none"/><path d="M29.25 34.3h2.5v3.05h3.05v2.5h-3.05v3.05h-2.5v-3.05h-3.05v-2.5h3.05z" fill="url(#gg)" stroke="#fff" stroke-width="2.200" stroke-opacity=".7"/><path d="M29.25 34.3h2.5v3.05h3.05v2.5h-3.05v3.05h-2.5v-3.05h-3.05v-2.5h3.05z" fill="url(#gg)" stroke="#1a961f" stroke-width=".9"/><path d="M19.7 64v-9h5l1.500 1.500h7.500v7.500z" fill="#e6c244" stroke="#b8922a" stroke-width=".7"/><path d="M19.7 64.2l3-7h14l-3 7z" fill="url(#gf)" stroke="#b8860f" stroke-width=".7"/><path d="M28.400 52.200c1.600-2.200 5.200-2.400 7 1.400" stroke="#1f8f22" stroke-width="1.800" fill="none"/><path d="M33.200 53.400l3.800 1.800.500-4.200z" fill="#1f8f22"/><path d="M19.4 142h13.8656l1.43438 1.43438v12.9094h-15.3z" fill="url(#gfl)" stroke="#1f55a8" stroke-width=".8"/><rect x="22.2687" y="142.6" width="9.5625" height="5.355" fill="#8c9cba"/><rect x="22.7469" y="150.606" width="8.60625" height="5.355" fill="#e4eefb"/><rect x="24.1812" y="151.562" width="2.48625" height="3.825" fill="#2f62b4"/><rect x="19.400" y="165.400" width="13.200" height="12.600" rx="1" fill="#fbfcfe" stroke="#4a6fa8" stroke-width=".9"/><path d="M22.400 167.600v6.800M21 169l1.400-1.400 1.400 1.400M21 173l1.400 1.400 1.400-1.400" stroke="#4a7fc4" stroke-width=".8" fill="none"/><path d="M26.6 171.8h8.51875l0.88125 0.88125v7.93125h-9.4z" fill="url(#gfl)" stroke="#1f55a8" stroke-width=".8"/><rect x="28.3625" y="172.4" width="5.875" height="3.29" fill="#8c9cba"/><rect x="28.6562" y="177.088" width="5.2875" height="3.29" fill="#e4eefb"/><rect x="29.5375" y="177.675" width="1.5275" height="2.35" fill="#2f62b4"/><path d="M20.2 211.4v-9h5l1.500 1.500h7.500v7.500z" fill="#e6c244" stroke="#b8922a" stroke-width=".7"/><path d="M20.2 211.6l3-7h14l-3 7z" fill="url(#gf)" stroke="#b8860f" stroke-width=".7"/><path d="M20.1 245.8c-.700-5 .800-8.600 5.300-8.600s6 3.600 5.300 8.600c-2.500.900-8.100.900-10.600 0z" fill="url(#gg)" stroke="#1f8a22" stroke-width=".7"/><path d="M23.8 237.5l1.600 2 1.600-2z" fill="#f4fbf2"/><circle cx="25.4" cy="233.9" r="4" fill="#f9d466" stroke="#c98a1a" stroke-width=".7"/><path d="M21.3 234.1c.100-3.400 2-4.600 4.100-4.600s4 1.200 4.100 4.600c-1.600-2-6.200-2.200-8.200 0z" fill="#d8811a"/><path d="M30.55 238.1h2.3v3.15h3.15v2.3h-3.15v3.15h-2.3v-3.15h-3.15v-2.3h3.15z" fill="url(#gg)" stroke="#fff" stroke-width="2.200" stroke-opacity=".7"/><path d="M30.55 238.1h2.3v3.15h3.15v2.3h-3.15v3.15h-2.3v-3.15h-3.15v-2.3h3.15z" fill="url(#gg)" stroke="#1a961f" stroke-width=".9"/><path d="M20.1 268.5c-.700-5 .800-8.600 5.300-8.600s6 3.600 5.300 8.600c-2.500.900-8.100.900-10.600 0z" fill="url(#gg)" stroke="#1f8a22" stroke-width=".7"/><path d="M23.8 260.2l1.600 2 1.600-2z" fill="#f4fbf2"/><circle cx="25.4" cy="256.6" r="4" fill="#f9d466" stroke="#c98a1a" stroke-width=".7"/><path d="M21.3 256.8c.100-3.400 2-4.600 4.100-4.600s4 1.200 4.100 4.600c-1.600-2-6.200-2.200-8.200 0z" fill="#d8811a"/><path d="M25.9 262.9h4.400v-3.100l5.500 5.200-5.500 5.200v-3.100h-4.400z" fill="none" stroke="#fff" stroke-width="2.200" stroke-opacity=".75"/><path d="M25.9 262.9h4.400v-3.100l5.500 5.200-5.500 5.200v-3.100h-4.400z" fill="url(#gg)" stroke="#17861c" stroke-width=".9"/><circle cx="26.400" cy="283.800" r="6.600" fill="#3f8fe0" stroke="#2a66b4" stroke-width=".8"/><path d="M21 282c.600-2.800 3.200-4.600 5.800-4.600 1.400 1.200.200 2.600-1.200 3.200-1 1 .400 2.200-.600 3.400-1.600.600-3.400-.200-4-2z" fill="#f7ec8c"/><path d="M29.500 279c2 1 3.300 3 3.300 5" stroke="#dfeefc" stroke-width="1.200" fill="none"/><path d="M25.9 285.6h4.400v-3.100l5.500 5.200-5.500 5.200v-3.100h-4.400z" fill="none" stroke="#fff" stroke-width="2.200" stroke-opacity=".75"/><path d="M25.9 285.6h4.400v-3.100l5.500 5.200-5.500 5.200v-3.100h-4.400z" fill="url(#gg)" stroke="#17861c" stroke-width=".9"/><path d="M21 301.200h10c.600 0 1 .400 1 1v6.800c0 .600-.400 1-1 1h-6.600l-2.200 2.600v-2.600h-1.200c-.600 0-1-.400-1-1v-6.800c0-.600.400-1 1-1z" fill="#5566a8" stroke="#404f8c" stroke-width=".6"/><text x="23.600" y="308.200" font-family="Liberation Sans, sans-serif" font-size="7.500" font-weight="bold" fill="#fff">S</text><path d="M25.9 308.2h4.400v-3.100l5.500 5.200-5.500 5.200v-3.100h-4.400z" fill="none" stroke="#fff" stroke-width="2.200" stroke-opacity=".75"/><path d="M25.9 308.2h4.400v-3.100l5.500 5.200-5.500 5.200v-3.100h-4.400z" fill="url(#gg)" stroke="#17861c" stroke-width=".9"/><path d="M31 363h3.800c1 0 1.600.600 1.600 1.600v5.400c0 1-.600 1.400-1.600 1.400h-12v-2z" fill="#e4e6ea" stroke="#8a8e98" stroke-width=".7"/><rect x="19.400" y="355.900" width="11.600" height="13.400" rx="1" fill="url(#gf)" stroke="#c89a14" stroke-width=".8"/><path d="M22.600 358v7.400h6.200M21.400 359.400l1.200-1.400 1.200 1.400M27.600 364.200l1.400 1.200-1.400 1.200" stroke="#3a8a8a" stroke-width=".9" fill="none"/><path d="M19.500 388.400l2.300-3.400h12.600l2.300 3.400v5c0 1-.600 1.600-1.600 1.600h-14c-1 0-1.600-.600-1.600-1.600z" fill="#e9ebef" stroke="#7e8490" stroke-width=".8"/><rect x="23.300" y="379.300" width="8.900" height="8.800" fill="url(#gf)" stroke="#c89a14" stroke-width=".8"/><path d="M27.200 381v4.800h3.200M27.200 384h-1.600" stroke="#3a8a8a" stroke-width=".9" fill="none"/><path d="M19.700 388.500h16.800" stroke="#9aa0aa" stroke-width=".7"/><rect x="22.600" y="390.400" width="10.400" height="3.400" rx=".800" fill="#fbf8e0" stroke="#8a8e98" stroke-width=".7"/></svg>
<svg class="abs" style="left:0;top:0;pointer-events:none" width="791" height="438"><rect x="15.6" y="194.4" width="179" height="23" fill="none" stroke="#ec3015" stroke-width="3.4"/><line x1="304.3" y1="109.2" x2="198" y2="173.5" stroke="#ec3015" stroke-width="4.1"/><path d="M182.300 182.900L193.800 164.400 204 180.700Z" fill="#ec3015"/></svg>
</body></html>
